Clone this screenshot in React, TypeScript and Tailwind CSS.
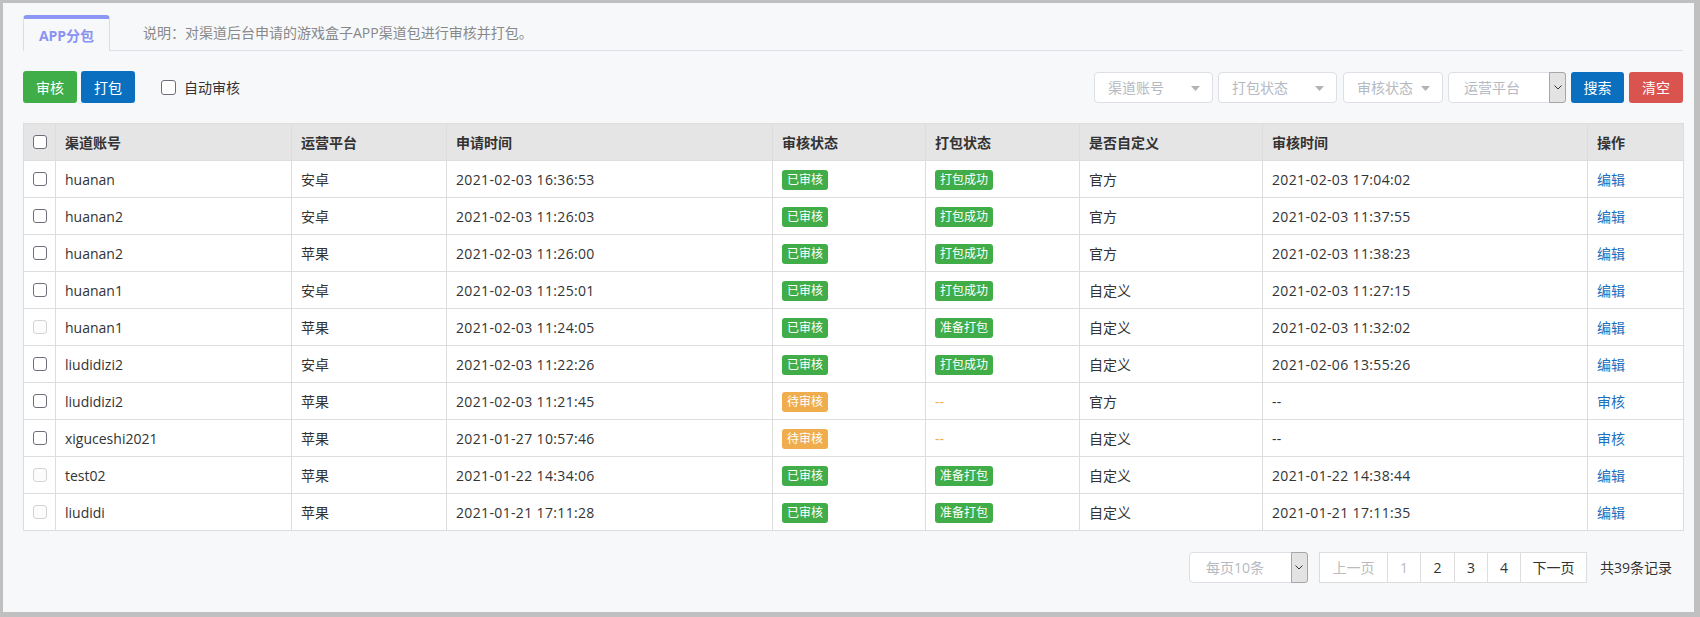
import React from "react";

type Row = {
  account: string;
  platform: string;
  applied: string;
  audit: "ok" | "wait";
  pack: "ok" | "ready" | "none";
  custom: string;
  auditTime: string;
  action: string;
  disabled?: boolean;
};

const rows: Row[] = [
  { account: "huanan", platform: "安卓", applied: "2021-02-03 16:36:53", audit: "ok", pack: "ok", custom: "官方", auditTime: "2021-02-03 17:04:02", action: "编辑" },
  { account: "huanan2", platform: "安卓", applied: "2021-02-03 11:26:03", audit: "ok", pack: "ok", custom: "官方", auditTime: "2021-02-03 11:37:55", action: "编辑" },
  { account: "huanan2", platform: "苹果", applied: "2021-02-03 11:26:00", audit: "ok", pack: "ok", custom: "官方", auditTime: "2021-02-03 11:38:23", action: "编辑" },
  { account: "huanan1", platform: "安卓", applied: "2021-02-03 11:25:01", audit: "ok", pack: "ok", custom: "自定义", auditTime: "2021-02-03 11:27:15", action: "编辑" },
  { account: "huanan1", platform: "苹果", applied: "2021-02-03 11:24:05", audit: "ok", pack: "ready", custom: "自定义", auditTime: "2021-02-03 11:32:02", action: "编辑", disabled: true },
  { account: "liudidizi2", platform: "安卓", applied: "2021-02-03 11:22:26", audit: "ok", pack: "ok", custom: "自定义", auditTime: "2021-02-06 13:55:26", action: "编辑" },
  { account: "liudidizi2", platform: "苹果", applied: "2021-02-03 11:21:45", audit: "wait", pack: "none", custom: "官方", auditTime: "--", action: "审核" },
  { account: "xiguceshi2021", platform: "苹果", applied: "2021-01-27 10:57:46", audit: "wait", pack: "none", custom: "自定义", auditTime: "--", action: "审核" },
  { account: "test02", platform: "苹果", applied: "2021-01-22 14:34:06", audit: "ok", pack: "ready", custom: "自定义", auditTime: "2021-01-22 14:38:44", action: "编辑", disabled: true },
  { account: "liudidi", platform: "苹果", applied: "2021-01-21 17:11:28", audit: "ok", pack: "ready", custom: "自定义", auditTime: "2021-01-21 17:11:35", action: "编辑", disabled: true },
];

function Box({ disabled }: { disabled?: boolean }) {
  return (
    <span
      className={
        "block w-[14px] h-[14px] rounded-[3px] border mx-auto " +
        (disabled ? "border-[#d4d4d8] bg-[#fcfcfc]" : "border-[#6e6e7a] bg-white")
      }
    />
  );
}

function Badge({ color, children }: { color: "green" | "orange"; children: React.ReactNode }) {
  return (
    <span
      className={
        "inline-flex items-center h-[20px] px-[5px] rounded-[3px] text-[12px] leading-none text-white " +
        (color === "green" ? "bg-[#41ad49]" : "bg-[#f0ad4e]")
      }
    >
      {children}
    </span>
  );
}

function Caret() {
  return (
    <svg width="9" height="5" viewBox="0 0 9 5" className="absolute right-[12px] top-[13px]">
      <path d="M0 0 L9 0 L4.5 5 Z" fill="#b0b3b8" />
    </svg>
  );
}

function Chevron() {
  return (
    <svg width="8" height="5" viewBox="0 0 8 5">
      <path d="M0.5 0.5 L4 4 L7.5 0.5" fill="none" stroke="#333" strokeWidth="1" />
    </svg>
  );
}

function FilterSelect({ label, w }: { label: string; w: string }) {
  return (
    <div className={"relative h-[31px] bg-white border border-[#dcdfe6] rounded-[4px] flex items-center pl-[13px] text-[14px] text-[#b4b9c2] " + w}>
      {label}
      <Caret />
    </div>
  );
}

const th = "border border-[#dddddd] px-[9px] text-left font-bold text-[#333]";
const td = "border border-[#dddddd] px-[9px] text-left";

export default function App() {
  return (
    <div
      className="w-[1700px] h-[617px] bg-[#c0c0c0] pl-[3px] pt-[3px] pr-[6px] pb-[5px]"
      style={{ fontFamily: '"Open Sans", "Noto Sans CJK SC", sans-serif' }}
    >
      <div className="w-full h-full bg-[#f7f8fa] pl-[20px] pr-[11px] pt-[12px] text-[14px] text-[#333]">
        {/* Tabs */}
        <div className="flex items-end border-b border-[#dcdfe6] h-[36px]">
          <div className="w-[87px] h-[36px] -mb-px bg-[#f7f8fa] border-x border-[#dddddd] border-t-4 border-t-[#8c96f5] rounded-t-[4px] flex items-center justify-center font-bold text-[#8a93f2] text-[14px]">
            APP分包
          </div>
          <div className="ml-[33px] h-[35px] flex items-center text-[14px] text-[#888]">
            说明：对渠道后台申请的游戏盒子APP渠道包进行审核并打包。
          </div>
        </div>

        {/* Toolbar */}
        <div className="mt-[20px] h-[32px] flex items-center">
          <button className="w-[54px] h-[32px] rounded-[3px] bg-[#3fae49] text-white text-[14px]">审核</button>
          <button className="ml-[4px] w-[54px] h-[32px] rounded-[3px] bg-[#0b6fc0] text-white text-[14px]">打包</button>
          <div className="ml-[26px] flex items-center">
            <span className="block w-[15px] h-[15px] rounded-[3px] border border-[#6e6e7a] bg-white" />
            <span className="ml-[8px] text-[14px] text-[#333]">自动审核</span>
          </div>
          <div className="ml-auto flex items-center">
            <FilterSelect label="渠道账号" w="w-[119px]" />
            <div className="ml-[5px]"><FilterSelect label="打包状态" w="w-[119px]" /></div>
            <div className="ml-[6px]"><FilterSelect label="审核状态" w="w-[100px]" /></div>
            <div className="ml-[5px] relative w-[118px] h-[31px] bg-white border border-[#dcdfe6] rounded-[4px] flex items-center text-[14px] text-[#b4b9c2]">
              <span className="flex-1 pl-[15px]">运营平台</span>
              <span className="w-[17px] h-[31px] -my-px -mr-px bg-[#e3e3e3] border border-[#a6a6a6] rounded-r-[3px] flex items-center justify-center">
                <Chevron />
              </span>
            </div>
            <button className="ml-[5px] w-[53px] h-[31px] rounded-[3px] bg-[#0b6fc0] text-white text-[14px]">搜索</button>
            <button className="ml-[5px] w-[54px] h-[31px] rounded-[3px] bg-[#d9534f] text-white text-[14px]">清空</button>
          </div>
        </div>

        {/* Table */}
        <table className="mt-[20px] w-[1660px] table-fixed border-collapse bg-white text-[14px] text-[#333]">
          <colgroup>
            <col className="w-[32px]" />
            <col className="w-[236px]" />
            <col className="w-[155px]" />
            <col className="w-[326px]" />
            <col className="w-[153px]" />
            <col className="w-[154px]" />
            <col className="w-[183px]" />
            <col className="w-[325px]" />
            <col className="w-[96px]" />
          </colgroup>
          <thead>
            <tr className="h-[37px] bg-[#e5e5e5]">
              <th className="border border-[#dddddd] p-0"><Box /></th>
              <th className={th}>渠道账号</th>
              <th className={th}>运营平台</th>
              <th className={th}>申请时间</th>
              <th className={th}>审核状态</th>
              <th className={th}>打包状态</th>
              <th className={th}>是否自定义</th>
              <th className={th}>审核时间</th>
              <th className={th}>操作</th>
            </tr>
          </thead>
          <tbody>
            {rows.map((r, i) => (
              <tr key={i} className="h-[37px]">
                <td className="border border-[#dddddd] p-0"><Box disabled={r.disabled} /></td>
                <td className={td}>{r.account}</td>
                <td className={td}>{r.platform}</td>
                <td className={td + " tracking-[0.35px]"}>{r.applied}</td>
                <td className={td}>
                  {r.audit === "ok" ? <Badge color="green">已审核</Badge> : <Badge color="orange">待审核</Badge>}
                </td>
                <td className={td}>
                  {r.pack === "ok" ? (
                    <Badge color="green">打包成功</Badge>
                  ) : r.pack === "ready" ? (
                    <Badge color="green">准备打包</Badge>
                  ) : (
                    <span className="text-[#f0ad4e]">--</span>
                  )}
                </td>
                <td className={td}>{r.custom}</td>
                <td className={td + " tracking-[0.35px]"}>{r.auditTime}</td>
                <td className={td}>
                  <span className="text-[#1a6fc0]">{r.action}</span>
                </td>
              </tr>
            ))}
          </tbody>
        </table>

        {/* Pagination */}
        <div className="mt-[21px] flex items-center justify-end pr-[11px]">
          <div className="w-[119px] h-[31px] bg-white border border-[#dcdfe6] rounded-[4px] flex items-center text-[14px] text-[#b4b9c2]">
            <span className="flex-1 pl-[16px]">每页10条</span>
            <span className="w-[17px] h-[31px] -my-px -mr-px bg-[#e3e3e3] border border-[#a6a6a6] rounded-r-[3px] flex items-center justify-center">
              <Chevron />
            </span>
          </div>
          <div className="ml-[11px] h-[31px] flex border border-[#dddddd] bg-white text-[14px]">
            <span className="w-[67px] flex items-center justify-center text-[#bbbbbb]">上一页</span>
            <span className="w-[33px] flex items-center justify-center border-l border-[#dddddd] text-[#bbbbbb]">1</span>
            <span className="w-[34px] flex items-center justify-center border-l border-[#dddddd] text-[#333]">2</span>
            <span className="w-[33px] flex items-center justify-center border-l border-[#dddddd] text-[#333]">3</span>
            <span className="w-[33px] flex items-center justify-center border-l border-[#dddddd] text-[#333]">4</span>
            <span className="w-[66px] flex items-center justify-center border-l border-[#dddddd] text-[#333]">下一页</span>
          </div>
          <span className="ml-[13px] text-[14px] text-[#333]">共39条记录</span>
        </div>
      </div>
    </div>
  );
}
